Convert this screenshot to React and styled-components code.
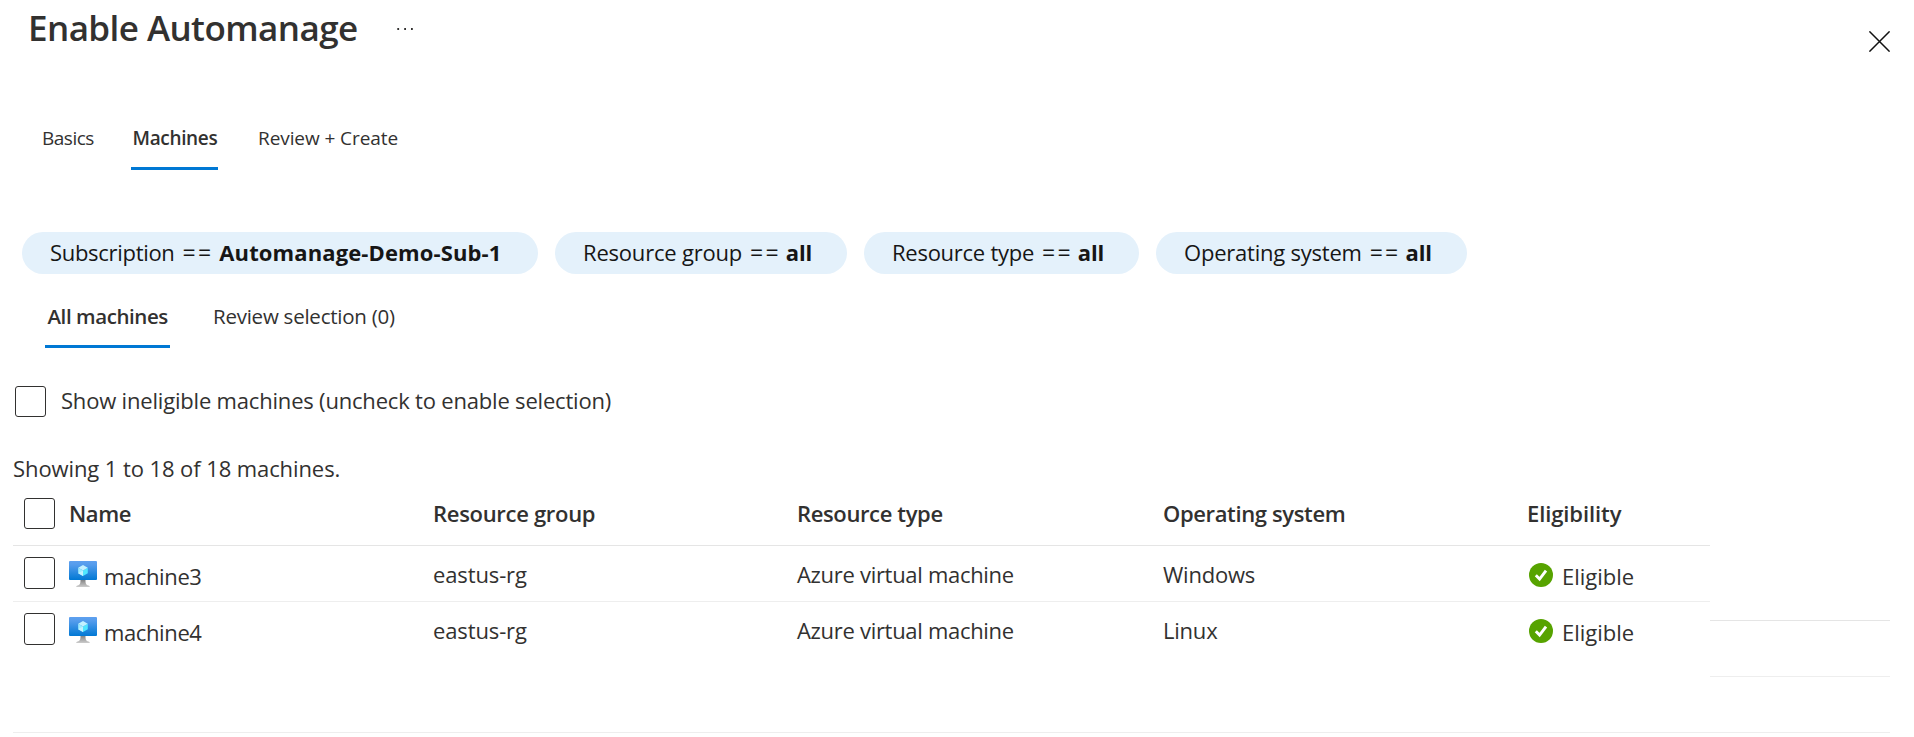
import React from "react";
import styled, { createGlobalStyle } from "styled-components";

const Global = createGlobalStyle`
  * { box-sizing: border-box; }
  body {
    margin: 0;
    background: #fff;
    color: #323130;
    font-family: "Open Sans", "Noto Sans", sans-serif;
  }
`;

const Page = styled.div`
  display: flex;
  flex-direction: column;
  width: 1914px;
  height: 737px;
  overflow: hidden;
`;

const Label = styled.span`
  font-size: ${(p) => p.$size || 22}px;
  font-weight: ${(p) => p.$weight || 400};
  letter-spacing: ${(p) => p.$track || 0}px;
  line-height: ${(p) => p.$line || 30}px;
  white-space: pre;
`;

const Header = styled.header`
  display: flex;
  align-items: flex-start;
  height: 118px;
  padding: 9px 24px 0 28px;
`;

const Title = styled.h1`
  margin: 0;
  padding-top: 1px;
  width: 369px;
  font-size: 35px;
  font-weight: 600;
  letter-spacing: -0.57px;
  line-height: 36px;
`;

const MoreButton = styled.button`
  display: flex;
  margin: 18px 0 0;
  padding: 0;
  border: 0;
  background: none;
`;

const CloseButton = styled(MoreButton)`
  margin: 22px 0 0 auto;
`;

const Tabs = styled.nav`
  display: flex;
  gap: ${(p) => p.$gap}px;
  height: ${(p) => p.$height}px;
  margin-top: ${(p) => p.$top || 0}px;
  padding-left: ${(p) => p.$left}px;
`;

const Tab = styled.a`
  width: ${(p) => p.$width}px;
  padding: ${(p) => p.$pad};
  border-bottom: 3px solid ${(p) => (p.$active ? "#0078d4" : "transparent")};
`;

const Filters = styled.div`
  display: flex;
  gap: 17px;
  margin-top: 62px;
  padding-left: 22px;
`;

const Pill = styled.div`
  display: flex;
  align-items: center;
  width: ${(p) => p.$width}px;
  height: 42px;
  padding: 0 0 2px 28px;
  border-radius: 21px;
  background: #e4f1fb;
  color: #161616;
`;

const Equals = styled(Label)`
  margin: 0 5px 0 8px;
`;

const CheckRow = styled.label`
  display: flex;
  gap: 15px;
  height: 31px;
  margin-top: 38px;
  padding-left: 15px;
`;

const Checkbox = styled.span`
  flex: none;
  width: 31px;
  height: ${(p) => p.$height || 31}px;
  border: 1px solid #323130;
  border-radius: 3px;
  background: #fff;
`;

const Summary = styled.div`
  display: flex;
  height: 30px;
  margin-top: 36px;
  padding-left: 13px;
`;

const TableArea = styled.div`
  display: flex;
  width: 1877px;
  height: 250px;
  margin-left: 13px;
  border-bottom: 1px solid #eeeeee;
`;

const Table = styled.div`
  width: 1697px;
`;

const Row = styled.div`
  display: grid;
  grid-template-columns: 55px 364px 364px 366px 364px 1fr;
  align-items: start;
  height: ${(p) => p.$height}px;
  padding-top: ${(p) => p.$top}px;
  border-bottom: ${(p) => (p.$line ? `1px solid ${p.$line}` : "0")};
`;

const Cell = styled.div`
  display: flex;
  align-items: flex-start;
  padding: ${(p) => p.$pad || "0"};
`;

const Side = styled.div`
  flex: 1;
`;

const SideRow = styled.div`
  height: ${(p) => p.$height}px;
  border-bottom: 1px solid ${(p) => p.$line};
`;

const Icon = styled.svg`
  flex: none;
  display: block;
  margin: ${(p) => p.$margin || "0"};
`;

const MoreIcon = () => (
  <Icon width="16" height="4" viewBox="0 0 16 4" fill="#323130">
    <rect x="0.3" y="1" width="1.8" height="2" />
    <rect x="7.2" y="1" width="1.8" height="2" />
    <rect x="14" y="1" width="1.8" height="2" />
  </Icon>
);

const CloseIcon = () => (
  <Icon width="21" height="21" viewBox="0 0 21 21" stroke="#111" strokeWidth="1.5">
    <path d="M0.4 0.4L20.6 20.6M20.6 0.4L0.4 20.6" />
  </Icon>
);

const MachineIcon = ({ id }) => (
  <Icon width="28" height="26" viewBox="0 0 28 26" $margin="4px 7px 0 1px">
    <defs>
      <linearGradient id={`${id}-screen`} x1="0" y1="0" x2="0" y2="1">
        <stop offset="0" stopColor="#5ea0ef" />
        <stop offset="0.2" stopColor="#559cec" />
        <stop offset="1" stopColor="#0078d4" />
      </linearGradient>
      <linearGradient id={`${id}-stand`} x1="0" y1="0" x2="0" y2="1">
        <stop offset="0" stopColor="#808080" />
        <stop offset="1" stopColor="#cccccc" />
      </linearGradient>
    </defs>
    <path d="M11.5 18.5h5c0 3.4.1 5.4 2.9 5.9.8.1 1.4.8 1.4 1.6H7.2c0-.8.6-1.5 1.4-1.6 2.8-.5 2.9-2.5 2.9-5.9z" fill={`url(#${id}-stand)`} />
    <rect width="28" height="19" rx="1" fill={`url(#${id}-screen)`} />
    <path d="M18.8 6.700v5.500L14 15V9.500z" fill="#50e6ff" />
    <path d="M18.8 6.7L14 9.5 9.2 6.7 14 3.9z" fill="#c3f1ff" />
    <path d="M14 9.5V15l-4.8-2.800V6.700z" fill="#9cebff" />
    <path d="M9.2 12.2L14 9.5V15z" fill="#c3f1ff" />
  </Icon>
);

const CheckIcon = () => (
  <Icon width="24" height="24" viewBox="0 0 24 24" $margin="6px 9px 0 3px">
    <circle cx="12" cy="12" r="12" fill="#57a300" />
    <path d="M6.8 12.2L10.6 16.1 17 7.700" fill="none" stroke="#fff" strokeWidth="2.9" />
  </Icon>
);

const filters = [
  { name: "Subscription", value: "Automanage-Demo-Sub-1", width: 516, track: -0.3, valueTrack: 0.12, indent: 1 },
  { name: "Resource group", value: "all", width: 292, track: -0.2, valueTrack: -0.1 },
  { name: "Resource type", value: "all", width: 275, track: -0.26, valueTrack: -0.1 },
  { name: "Operating system", value: "all", width: 311, track: -0.22, valueTrack: -0.1 },
];

const FilterValue = styled(Label)`
  margin-left: ${(p) => p.$indent || 0}px;
`;

const columns = [
  { name: "Name", track: -0.4 },
  { name: "Resource group", track: -0.3 },
  { name: "Resource type", track: -0.37 },
  { name: "Operating system", track: -0.37 },
  { name: "Eligibility", track: -0.1 },
];

const machines = [
  { name: "machine3", group: "eastus-rg", type: "Azure virtual machine", os: "Windows", line: "#eeeeee" },
  { name: "machine4", group: "eastus-rg", type: "Azure virtual machine", os: "Linux" },
];

export default function App() {
  return (
    <Page>
      <Global />
      <Header>
        <Title>Enable Automanage</Title>
        <MoreButton aria-label="More"><MoreIcon /></MoreButton>
        <CloseButton aria-label="Close"><CloseIcon /></CloseButton>
      </Header>

      <Tabs $gap={38} $height={52} $left={40}>
        <Tab $width={53} $pad="6px 0 0 2px"><Label $size={19} $track={-0.5} $line={28}>Basics</Label></Tab>
        <Tab $width={87} $pad="6px 0 0 1.5px" $active><Label $size={19} $weight={600} $track={-0.35} $line={28}>Machines</Label></Tab>
        <Tab $width={144} $pad="6px 0 0 2px"><Label $size={19} $track={-0.08} $line={28}>Review + Create</Label></Tab>
      </Tabs>

      <Filters>
        {filters.map((f) => (
          <Pill key={f.name} $width={f.width}>
            <Label $track={f.track}>{f.name}</Label>
            <Equals $size={23} $track={2.2}>==</Equals>
            <FilterValue $weight={700} $track={f.valueTrack} $indent={f.indent}>{f.value}</FilterValue>
          </Pill>
        ))}
      </Filters>

      <Tabs $gap={40} $height={54} $top={20} $left={45}>
        <Tab $width={125} $pad="8px 0 0 2.5px" $active><Label $size={20.5} $weight={600} $track={-0.43} $line={28}>All machines</Label></Tab>
        <Tab $width={188} $pad="8px 0 0 3px"><Label $size={20.5} $track={-0.24} $line={28}>Review selection (0)</Label></Tab>
      </Tabs>

      <CheckRow>
        <Checkbox />
        <Label $track={-0.19} $line={28}>Show ineligible machines (uncheck to enable selection)</Label>
      </CheckRow>

      <Summary>
        <Label $track={-0.09}>Showing 1 to 18 of 18 machines.</Label>
      </Summary>

      <TableArea>
        <Table>
          <Row $height={63} $top={15} $line="#e5e5e5">
            <Cell $pad="0 0 0 11px"><Checkbox /></Cell>
            {columns.map((c) => (
              <Cell key={c.name} $pad="0 0 0 1px"><Label $weight={600} $track={c.track}>{c.name}</Label></Cell>
            ))}
          </Row>
          {machines.map((m) => (
            <Row key={m.name} $height={56} $top={11} $line={m.line}>
              <Cell $pad="0 0 0 11px"><Checkbox $height={32} /></Cell>
              <Cell>
                <MachineIcon id={m.name} />
                <Cell $pad="4px 0 0"><Label $track={-0.38}>{m.name}</Label></Cell>
              </Cell>
              <Cell $pad="2px 0 0 1px"><Label $track={-0.12}>{m.group}</Label></Cell>
              <Cell $pad="2px 0 0 1px"><Label $track={-0.3}>{m.type}</Label></Cell>
              <Cell $pad="2px 0 0 1px"><Label $track={-0.22}>{m.os}</Label></Cell>
              <Cell>
                <CheckIcon />
                <Cell $pad="4px 0 0"><Label>Eligible</Label></Cell>
              </Cell>
            </Row>
          ))}
        </Table>
        <Side>
          <SideRow $height={138} $line="#e5e5e5" />
          <SideRow $height={56} $line="#eeeeee" />
        </Side>
      </TableArea>
    </Page>
  );
}
